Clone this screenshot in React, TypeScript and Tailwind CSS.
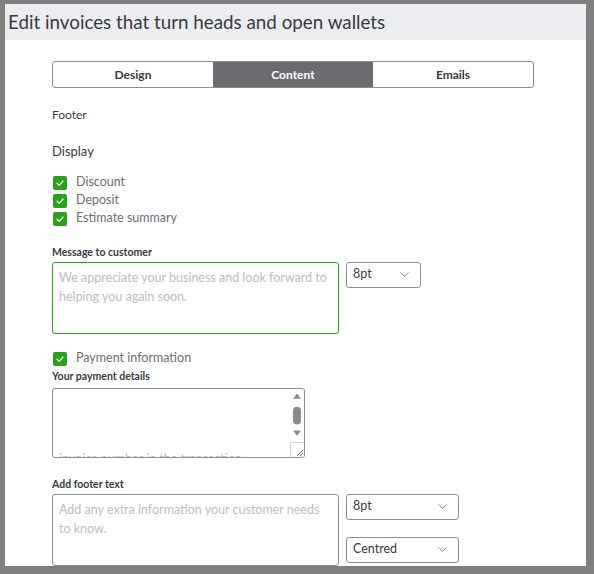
import { ChevronDown } from "lucide-react";

const font = { fontFamily: "Lato, 'Open Sans', sans-serif" };

function Check({ label }: { label: string }) {
  return (
    <div className="flex h-[18px] items-center gap-[9px]">
      <span className="ml-[1px] flex h-[14px] w-[14px] items-center justify-center rounded-[2px] bg-[#2ca01c]">
        <svg width="10" height="10" viewBox="0 0 10 10" fill="none">
          <path d="M2 5.2 L4.2 7.3 L8 3" stroke="white" strokeWidth="1.2" strokeLinecap="round" strokeLinejoin="round" />
        </svg>
      </span>
      <span className="text-[12.5px] text-[#6b6c72]">{label}</span>
    </div>
  );
}

function Select({ value, width }: { value: string; width: string }) {
  return (
    <div
      className={`flex h-[26px] items-center justify-between rounded-[3px] border border-[#8d9096] bg-white pl-[6px] pr-[8px] text-[12.5px] text-[#393a3d] ${width}`}
    >
      <span>{value}</span>
      <ChevronDown size={15} strokeWidth={1.3} className="text-[#6b6c72]" />
    </div>
  );
}

function FieldLabel({ children }: { children: string }) {
  return <div className="text-[10.5px] font-bold leading-[15px] text-[#393a3d]">{children}</div>;
}

export default function App() {
  return (
    <div className="h-[574px] w-[594px] bg-[#7f7f7f] pb-[8px] pl-[5px] pr-[8px] pt-[4px]" style={font}>
      <div className="flex h-full flex-col overflow-hidden bg-white">
        <div className="flex h-[36px] shrink-0 items-center bg-[#ebedf0] pl-[3px] text-[18.8px] text-[#393a3d]">
          Edit invoices that turn heads and open wallets
        </div>

        <div className="flex flex-col pl-[47px] pr-[52px]">
          <div className="mt-[21px] flex h-[27px] overflow-hidden rounded-[3px] border border-[#8d9096] text-[12px] font-bold">
            <div className="flex flex-1 items-center justify-center text-[#393a3d]">Design</div>
            <div className="flex flex-1 items-center justify-center bg-[#6b6c70] text-white">Content</div>
            <div className="flex flex-1 items-center justify-center text-[#393a3d]">Emails</div>
          </div>

          <div className="mt-[18px] text-[12px] text-[#393a3d]">Footer</div>
          <div className="mt-[18px] text-[13px] text-[#393a3d]">Display</div>

          <div className="mt-[12px] flex flex-col">
            <Check label="Discount" />
            <Check label="Deposit" />
            <Check label="Estimate summary" />
          </div>

          <div className="mt-[17px]">
            <FieldLabel>Message to customer</FieldLabel>
          </div>
          <div className="mt-[2px] flex items-start gap-[7px]">
            <div className="h-[72px] w-[287px] rounded-[3px] border border-[#2ca01c] px-[6px] pt-[5px] text-[12.5px] leading-[19px] text-[#babec5]">
              We appreciate your business and look forward to helping you again soon.
            </div>
            <Select value="8pt" width="w-[75px]" />
          </div>

          <div className="mt-[16px]">
            <Check label="Payment information" />
          </div>
          <div className="mt-[1px]">
            <FieldLabel>Your payment details</FieldLabel>
          </div>
          <div className="relative mt-[4px] flex h-[70px] w-[253px] overflow-hidden rounded-[3px] border border-[#8d9096]">
            <div className="flex-1 whitespace-nowrap px-[6px] pt-[60px] text-[12.5px] leading-[19px] text-[#babec5]">
              invoice number in the transaction
            </div>
            <div className="flex w-[14px] flex-col items-center">
              <svg width="14" height="54" viewBox="0 0 14 54">
                <path d="M3 10 L7 4.5 L11 10 Z" fill="#8a8a8a" />
                <rect x="3" y="18" width="8" height="18" rx="4" fill="#8a8a8a" />
                <path d="M3 42 L11 42 L7 47.5 Z" fill="#8a8a8a" />
              </svg>
              <div className="flex h-[15px] w-[14px] items-end justify-end border-l border-t border-[#d6d6d6] bg-white">
                <svg width="9" height="9" viewBox="0 0 9 9">
                  <path d="M2 8 L8 2 M5 8 L8 5" stroke="#6b6b6b" strokeWidth="0.9" />
                </svg>
              </div>
            </div>
          </div>

          <div className="mt-[19px]">
            <FieldLabel>Add footer text</FieldLabel>
          </div>
          <div className="mt-[2px] flex items-start gap-[7px]">
            <div className="h-[72px] w-[287px] rounded-[3px] border border-[#8d9096] px-[6px] pt-[5px] text-[12.5px] leading-[19px] text-[#babec5]">
              Add any extra information your customer needs to know.
            </div>
            <div className="flex flex-col gap-[17px]">
              <Select value="8pt" width="w-[113px]" />
              <Select value="Centred" width="w-[113px]" />
            </div>
          </div>
        </div>
      </div>
    </div>
  );
}
